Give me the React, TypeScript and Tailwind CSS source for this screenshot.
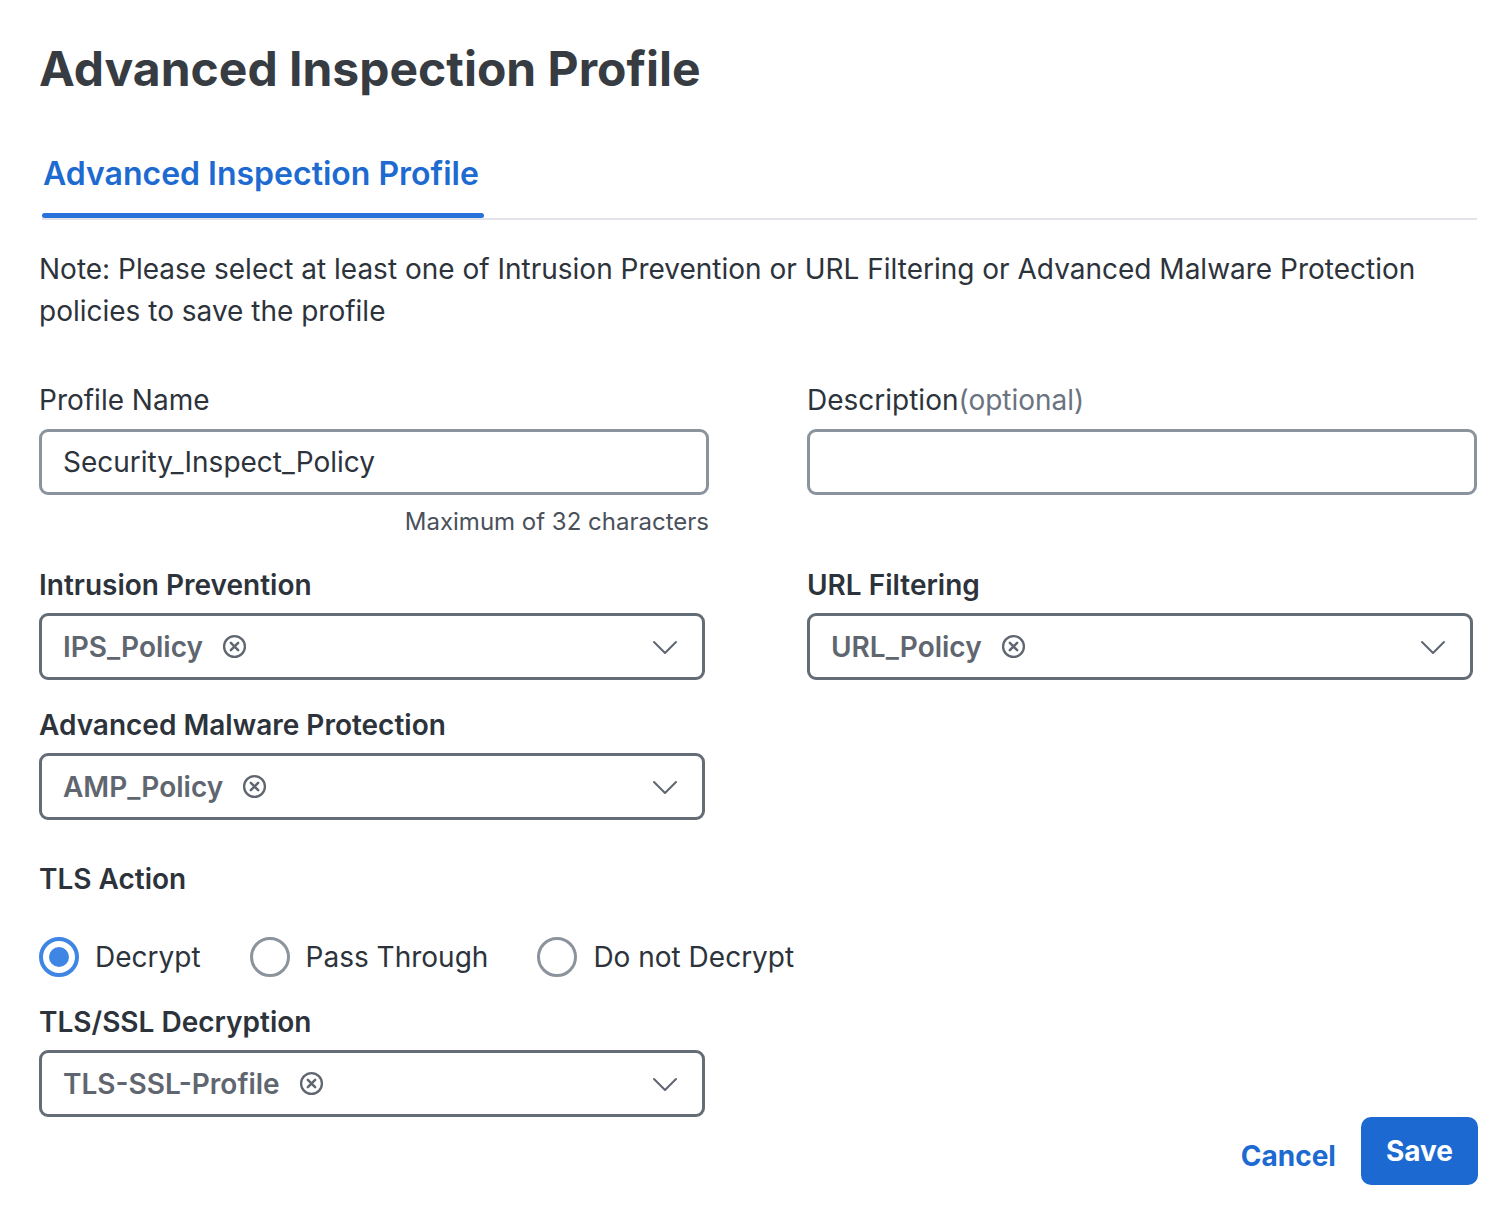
import type { FC, ReactNode } from 'react';

const ClearIcon: FC = () => (
  <svg width="25" height="25" viewBox="0 0 24 24" fill="none" className="shrink-0">
    <circle cx="12" cy="12" r="10" stroke="#5f6670" strokeWidth="2.2" />
    <path d="M8.5 8.5l7 7M15.5 8.5l-7 7" stroke="#5f6670" strokeWidth="2.4" strokeLinecap="round" />
  </svg>
);

const Chevron: FC = () => (
  <svg width="26" height="16" viewBox="0 0 26 16" fill="none" className="shrink-0">
    <path d="M2 3l11 11L24 3" stroke="#5f6670" strokeWidth="2" strokeLinecap="round" strokeLinejoin="round" />
  </svg>
);

const Label: FC<{ children: ReactNode; strong?: boolean }> = ({ children, strong }) => (
  <div className={`text-[28px] leading-[32px] text-[#2d333b] ${strong ? 'font-semibold' : 'font-normal'}`}>
    {children}
  </div>
);

const Select: FC<{ value: string }> = ({ value }) => (
  <div className="mt-[12px] w-[666px] h-[67px] border-[3px] border-[#646c75] rounded-[9px] flex items-center pl-[21px] pr-[24px]">
    <span className="text-[28px] font-semibold text-[#5f6670]">{value}</span>
    <span className="ml-[19px] flex"><ClearIcon /></span>
    <span className="ml-auto flex"><Chevron /></span>
  </div>
);

const Radio: FC<{ label: string; checked?: boolean }> = ({ label, checked }) => (
  <label className="flex items-center gap-[16px]">
    {checked ? (
      <span className="w-[40px] h-[40px] rounded-full border-[4px] border-[#3f86e4] flex items-center justify-center">
        <span className="w-[20px] h-[20px] rounded-full bg-[#3f86e4]" />
      </span>
    ) : (
      <span className="w-[40px] h-[40px] rounded-full border-[3px] border-[#8b939c]" />
    )}
    <span className="text-[28px] text-[#2d333b]">{label}</span>
  </label>
);

export default function App() {
  return (
    <div
      className="w-[1506px] h-[1220px] bg-white pl-[38px] pr-[28px] pt-[40px]"
      style={{ fontFamily: 'Inter, "Noto Sans", sans-serif' }}
    >
      <h1 className="ml-[1px] text-[48px] leading-[58px] font-bold text-[#373c42]">Advanced Inspection Profile</h1>

      <div className="mt-[56px] ml-[4px] mr-[1px] border-b-2 border-[#e2e4e9]">
        <div className="inline-flex flex-col">
          <div className="pl-[1px] pr-[5px] text-[32px] leading-[40px] font-semibold text-[#1d6ad1]">
            Advanced Inspection Profile
          </div>
          <div className="mt-[19px] h-[5px] rounded-full bg-[#2a72db]" />
        </div>
      </div>

      <p className="mt-[28px] ml-[1px] text-[28px] leading-[42px] text-[#2d333b]">
        Note: Please select at least one of Intrusion Prevention or URL Filtering or Advanced Malware Protection
        policies to save the profile
      </p>

      <div className="mt-[52px] ml-[1px] flex gap-[98px]">
        <div className="w-[670px]">
          <Label>Profile Name</Label>
          <div className="mt-[13px] h-[66px] border-[3px] border-[#8b939c] rounded-[9px] flex items-center pl-[21px]">
            <span className="text-[28px] text-[#2d333b]">Security_Inspect_Policy</span>
          </div>
          <div className="mt-[13px] text-right text-[24px] leading-[28px] text-[#4a515b]">Maximum of 32 characters</div>
        </div>
        <div className="w-[670px]">
          <Label>
            Description<span className="text-[#6b7380]">(optional)</span>
          </Label>
          <div className="mt-[13px] h-[66px] border-[3px] border-[#8b939c] rounded-[9px]" />
        </div>
      </div>

      <div className="mt-[33px] ml-[1px] flex gap-[98px]">
        <div className="w-[670px]">
          <Label strong>Intrusion Prevention</Label>
          <Select value="IPS_Policy" />
        </div>
        <div className="w-[670px]">
          <Label strong>URL Filtering</Label>
          <Select value="URL_Policy" />
        </div>
      </div>

      <div className="mt-[29px] ml-[1px]">
        <Label strong>Advanced Malware Protection</Label>
        <Select value="AMP_Policy" />
      </div>

      <div className="mt-[43px] ml-[1px]">
        <Label strong>TLS Action</Label>
        <div className="mt-[41px] flex items-center gap-[49px]">
          <Radio label="Decrypt" checked />
          <Radio label="Pass Through" />
          <Radio label="Do not Decrypt" />
        </div>
      </div>

      <div className="mt-[28px] ml-[1px]">
        <Label strong>TLS/SSL Decryption</Label>
        <Select value="TLS-SSL-Profile" />
      </div>

      <div className="flex justify-end items-center gap-[25px]">
        <button className="mt-[10px] text-[28px] font-bold text-[#1d6ad1]">Cancel</button>
        <button className="h-[68px] px-[25px] rounded-[10px] bg-[#1d69d2] text-[28px] font-bold text-white">Save</button>
      </div>
    </div>
  );
}
